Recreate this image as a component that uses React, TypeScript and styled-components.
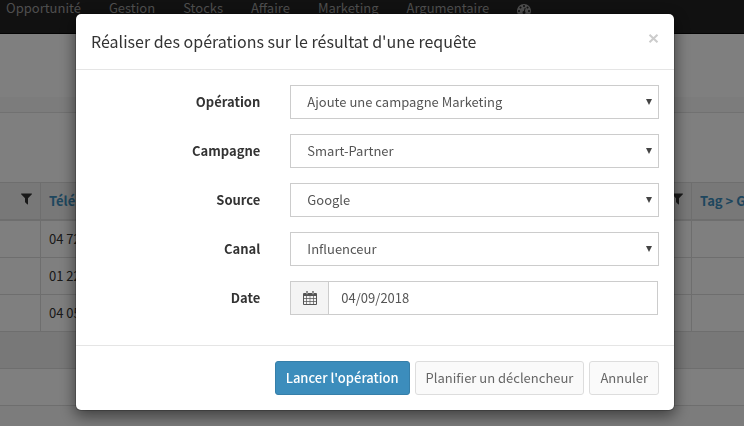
import React from "react";
import styled, { createGlobalStyle } from "styled-components";

const GlobalStyle = createGlobalStyle`
  *, *::before, *::after { box-sizing: border-box; }
  body {
    margin: 0;
    background: #f8f8f8;
    color: #333;
    font-family: "Source Sans Pro", "Noto Sans CJK SC", "Noto Sans", sans-serif;
    font-size: 13px;
    line-height: 20px;
    overflow: hidden;
  }
  button, input, select { font: inherit; margin: 0; }
`;

const Page = styled.div`
  min-height: 100vh;
`;

const Navbar = styled.nav`
  display: flex;
  gap: 28px;
  height: 34px;
  padding: 0 6px;
  background: #222;
  border-bottom: 1px solid #080808;
`;

const NavLink = styled.a`
  display: block;
  height: 16px;
  line-height: 16px;
  color: #9d9d9d;
  text-decoration: none;
  white-space: nowrap;

  svg { display: block; margin-top: 2px; }
`;

const Heading = styled.header`
  height: 63px;
  background: #fff;
`;

const Band = styled.div`
  height: 16px;
  background: #f8f8f8;
  border-bottom: 1px solid #e2e2e2;
`;

const Toolbar = styled.div`
  height: 69px;
  background: #fff;
`;

const Grid = styled.table`
  width: 100%;
  table-layout: fixed;
  border-collapse: separate;
  border-spacing: 0;
  border-top: 1px solid #ddd;
  background: #fff;
`;

const NarrowCol = styled.col`
  width: 40px;
`;

const LastCol = styled.col`
  width: 53px;
`;

const HeadCell = styled.th`
  height: 38px;
  padding: 0 8px;
  background: #f0f0f0;
  border-bottom: 2px solid #ddd;
  text-align: left;
  white-space: nowrap;
  overflow: hidden;

  & + & { border-left: 1px solid #ddd; }
`;

const HeadContent = styled.div`
  display: flex;
  justify-content: space-between;
  align-items: flex-start;
  min-height: 20px;

  svg { flex: none; margin: 2px 0 0 auto; }
`;

const HeadLink = styled.a`
  color: #3c8dbc;
  text-decoration: none;
`;

const Cell = styled.td`
  height: 37px;
  padding: 0 8px;
  border-bottom: 1px solid #ddd;
  white-space: nowrap;

  & + & { border-left: 1px solid #ddd; }
`;

const Strip = styled.div<{ $shade: string }>`
  height: 37px;
  background: ${(p) => p.$shade};
  border-bottom: 1px solid #ddd;
`;

const Backdrop = styled.div`
  position: fixed;
  inset: 0;
  display: flex;
  align-items: flex-start;
  justify-content: center;
  padding: 13px 69px 15px 75px;
  background: rgba(0, 0, 0, 0.5);
`;

const Dialog = styled.section`
  width: 100%;
  max-width: 600px;
  background: #fff;
  background-clip: padding-box;
  border: 1px solid rgba(0, 0, 0, 0.2);
  border-radius: 6px;
  box-shadow: 0 5px 15px rgba(0, 0, 0, 0.5);
`;

const DialogHeader = styled.header`
  display: flex;
  align-items: flex-start;
  justify-content: space-between;
  padding: 15px;
  border-bottom: 1px solid #e5e5e5;
`;

const Title = styled.h4`
  margin: 0;
  font-size: 16px;
  font-weight: 400;
  line-height: 25px;
`;

const CloseButton = styled.button`
  padding: 5px 0;
  border: 0;
  background: none;
  color: #ccc;
  cursor: pointer;

  svg { display: block; }
`;

const DialogBody = styled.div`
  display: grid;
  gap: 15px;
  padding: 15px 0 30px;
`;

const FormRow = styled.div`
  display: grid;
  grid-template-columns: 1fr 2fr;
`;

const Label = styled.label`
  padding: 7px 15px 7px 0;
  text-align: right;
  font-weight: 700;
`;

const Field = styled.div`
  position: relative;
  display: flex;
  height: 34px;
  margin: 0 15px;
`;

const Select = styled.select`
  width: 100%;
  padding: 0 24px 0 16px;
  border: 1px solid #ccc;
  border-radius: 0;
  background: #fff;
  color: #555;
  appearance: none;
`;

const Arrow = styled.svg`
  position: absolute;
  top: 14px;
  right: 7px;
  pointer-events: none;
`;

const DateGroup = styled(Field)`
  margin-right: 16px;
`;

const Addon = styled.span`
  display: flex;
  flex: none;
  align-items: center;
  justify-content: center;
  width: 38px;
  border: 1px solid #ccc;
  border-right: 0;
  background: #f4f4f4;
  color: #555;
`;

const TextInput = styled.input`
  flex: 1;
  min-width: 0;
  padding: 0 12px;
  border: 1px solid #ccc;
  border-radius: 0;
  color: #555;
`;

const DialogFooter = styled.footer`
  display: flex;
  justify-content: flex-end;
  gap: 5px;
  padding: 15px;
  border-top: 1px solid #e5e5e5;
`;

const Button = styled.button<{ $primary?: boolean }>`
  height: 34px;
  padding: 0 10px;
  border: 1px solid ${(p) => (p.$primary ? "#367fa9" : "#ddd")};
  border-radius: 3px;
  background: ${(p) => (p.$primary ? "#3c8dbc" : "#fafafa")};
  color: ${(p) => (p.$primary ? "#fff" : "#666")};
  font-weight: ${(p) => (p.$primary ? 500 : 400)};
  white-space: nowrap;
  cursor: pointer;
`;

const GaugeIcon = () => (
  <svg width="14" height="14" viewBox="0 128 1792 1536" fill="currentColor" aria-hidden="true">
    <path d="M384 1152q0-53-37.5-90.5t-90.5-37.5-90.5 37.5-37.5 90.5 37.5 90.5 90.5 37.5 90.5-37.5 37.5-90.5zm192-448q0-53-37.5-90.5t-90.5-37.5-90.5 37.5-37.5 90.5 37.5 90.5 90.5 37.5 90.5-37.5 37.5-90.5zm428 481l101-382q6-26-7.5-48.5t-38.5-29.5-48 6.5-30 39.5l-101 382q-60 5-107 43.5t-63 98.5q-20 77 20 146t117 89 146-20 89-117q16-60-6-117t-72-91zm660-33q0-53-37.5-90.5t-90.5-37.5-90.5 37.5-37.5 90.5 37.5 90.5 90.5 37.5 90.5-37.5 37.5-90.5zm-640-640q0-53-37.5-90.5t-90.5-37.5-90.5 37.5-37.5 90.5 37.5 90.5 90.5 37.5 90.5-37.5 37.5-90.5zm448 192q0-53-37.5-90.5t-90.5-37.5-90.5 37.5-37.5 90.5 37.5 90.5 90.5 37.5 90.5-37.5 37.5-90.5zm320 448q0 261-141 483-19 29-54 29h-1402q-35 0-54-29-141-221-141-483 0-182 71-348t191-286 286-191 348-71 348 71 286 191 191 286 71 348z" />
  </svg>
);

const FilterIcon = () => (
  <svg width="11" height="12" viewBox="192 256 1408 1408" fill="currentColor" aria-hidden="true">
    <path d="M1595 295q17 41-14 70l-493 493v742q0 42-39 59-13 5-25 5-27 0-45-19l-256-256q-19-19-19-45v-486l-493-493q-31-29-14-70 17-39 59-39h1280q42 0 59 39z" />
  </svg>
);

const CalendarIcon = () => (
  <svg width="14" height="14" viewBox="0 0 14 14" fill="currentColor" aria-hidden="true">
    <path
      fillRule="evenodd"
      d="M3 1a1 1 0 0 1 2 0v1h4V1a1 1 0 0 1 2 0v1h2a1 1 0 0 1 1 1v10a1 1 0 0 1-1 1H1a1 1 0 0 1-1-1V3a1 1 0 0 1 1-1h2zM3.6.8v2.5h.8V.8zM9.6.8v2.5h.8V.8zM1 5v2.3h2.3V5zM4 5v2.3h2.7V5zM7.3 5v2.3H10V5zM10.7 5v2.3H13V5zM1 8v2.3h2.3V8zM4 8v2.3h2.7V8zM7.3 8v2.3H10V8zM10.7 8v2.3H13V8zM1 11v2h2.3v-2zM4 11v2h2.7v-2zM7.3 11v2H10v-2zM10.7 11v2H13v-2z"
    />
  </svg>
);

const CloseIcon = () => (
  <svg width="11" height="9" viewBox="0 0 11 9" stroke="currentColor" strokeWidth="2" aria-hidden="true">
    <path d="M1.5 .7L9.5 8.3M9.5 .7L1.5 8.3" />
  </svg>
);

const menu = ["Opportunité", "Gestion", "Stocks", "Affaire", "Marketing", "Argumentaire"];
const phones = ["04 72", "01 22", "04 05"];
const choices = [
  { id: "operation", label: "Opération", value: "Ajoute une campagne Marketing" },
  { id: "campagne", label: "Campagne", value: "Smart-Partner" },
  { id: "source", label: "Source", value: "Google" },
  { id: "canal", label: "Canal", value: "Influenceur" },
];

export default function App() {
  return (
    <>
      <GlobalStyle />
      <Page>
        <Navbar>
          {menu.map((item) => (
            <NavLink key={item} href="#">{item}</NavLink>
          ))}
          <NavLink href="#" aria-label="Tableau de bord"><GaugeIcon /></NavLink>
        </Navbar>
        <Heading />
        <Band />
        <Toolbar />
        <Grid>
          <colgroup>
            <NarrowCol />
            <col />
            <LastCol />
          </colgroup>
          <thead>
            <tr>
              <HeadCell><HeadContent><FilterIcon /></HeadContent></HeadCell>
              <HeadCell>
                <HeadContent><HeadLink href="#">Téléphone</HeadLink><FilterIcon /></HeadContent>
              </HeadCell>
              <HeadCell><HeadLink href="#">Tag &gt; G</HeadLink></HeadCell>
            </tr>
          </thead>
          <tbody>
            {phones.map((phone) => (
              <tr key={phone}>
                <Cell />
                <Cell>{phone}</Cell>
                <Cell />
              </tr>
            ))}
          </tbody>
        </Grid>
        <Strip $shade="#f0f0f0" />
        <Strip $shade="#fff" />
      </Page>
      <Backdrop>
        <Dialog role="dialog" aria-modal="true" aria-labelledby="dialog-title">
          <DialogHeader>
            <Title id="dialog-title">Réaliser des opérations sur le résultat d'une requête</Title>
            <CloseButton type="button" aria-label="Fermer"><CloseIcon /></CloseButton>
          </DialogHeader>
          <DialogBody>
            {choices.map(({ id, label, value }) => (
              <FormRow key={id}>
                <Label htmlFor={id}>{label}</Label>
                <Field>
                  <Select id={id} defaultValue={value}>
                    <option>{value}</option>
                  </Select>
                  <Arrow width="6" height="6" viewBox="0 0 6 6" fill="#444" aria-hidden="true">
                    <path d="M0 0h6L3 6z" />
                  </Arrow>
                </Field>
              </FormRow>
            ))}
            <FormRow>
              <Label htmlFor="date">Date</Label>
              <DateGroup>
                <Addon><CalendarIcon /></Addon>
                <TextInput id="date" type="text" defaultValue="04/09/2018" />
              </DateGroup>
            </FormRow>
          </DialogBody>
          <DialogFooter>
            <Button type="button" $primary>Lancer l'opération</Button>
            <Button type="button">Planifier un déclencheur</Button>
            <Button type="button">Annuler</Button>
          </DialogFooter>
        </Dialog>
      </Backdrop>
    </>
  );
}
